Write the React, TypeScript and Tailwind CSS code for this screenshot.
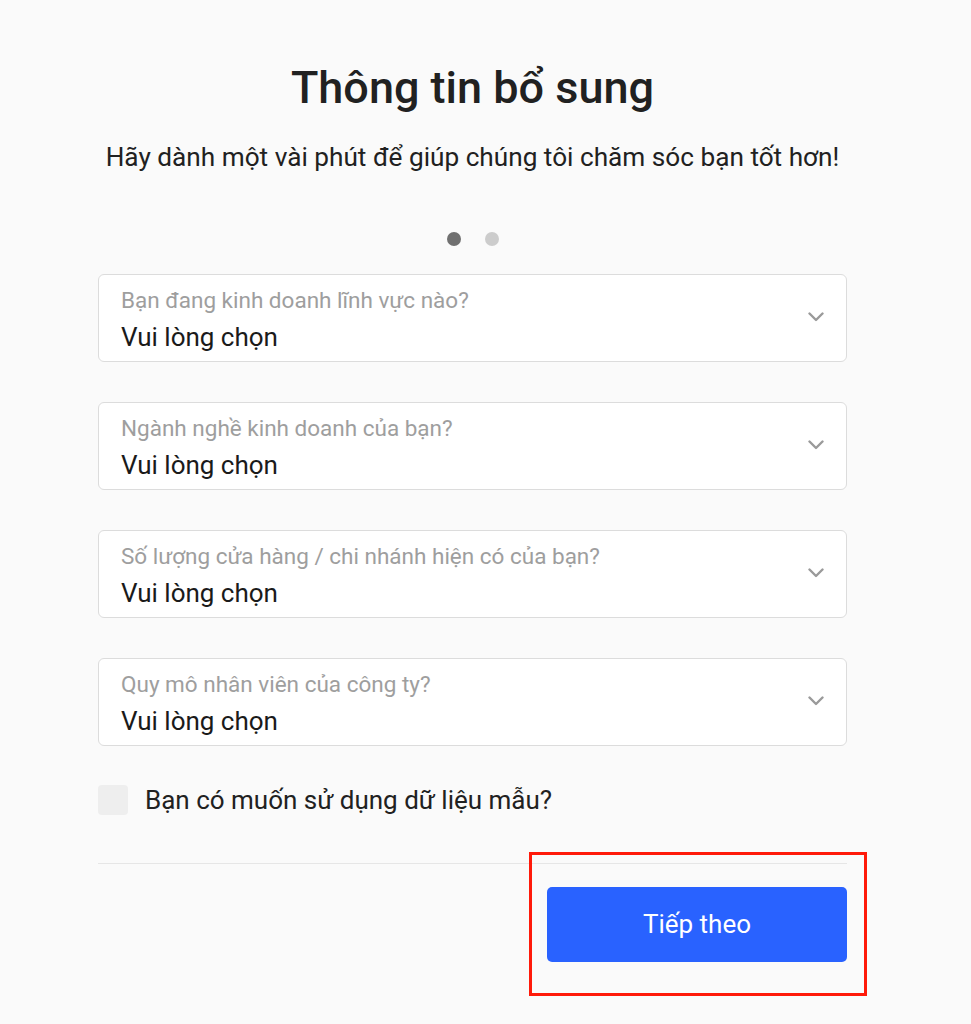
const fields = [
  "Bạn đang kinh doanh lĩnh vực nào?",
  "Ngành nghề kinh doanh của bạn?",
  "Số lượng cửa hàng / chi nhánh hiện có của bạn?",
  "Quy mô nhân viên của công ty?",
];

function Chevron() {
  return (
    <svg width="16" height="10" viewBox="0 0 16 10" fill="none" className="mr-[4px] mt-[-2px]">
      <path
        d="M1.5 1.5 L8 8 L14.5 1.5"
        stroke="#9a9a9a"
        strokeWidth="2.4"
        strokeLinecap="round"
        strokeLinejoin="round"
      />
    </svg>
  );
}

export default function App() {
  return (
    <div className="relative min-h-[1024px] w-full bg-[#fafafa] font-['Roboto',sans-serif]">
      <div className="ml-[98px] flex w-[749px] flex-col pt-[58px]">
        <h1 className="text-center text-[45px] font-medium leading-[60px] text-[#212121]">
          Thông tin bổ sung
        </h1>
        <p className="mt-[22px] text-center text-[26.2px] leading-[34px] text-[#212121]">
          Hãy dành một vài phút để giúp chúng tôi chăm sóc bạn tốt hơn!
        </p>

        {/* Step dots */}
        <div className="mt-[58px] flex justify-center gap-[24px]">
          <span className="h-[14px] w-[14px] rounded-full bg-[#707070]" />
          <span className="h-[14px] w-[14px] rounded-full bg-[#cccccc]" />
        </div>

        <div className="mt-[28px] flex flex-col gap-[40px]">
          {fields.map((label) => (
            <div
              key={label}
              className="flex h-[88px] items-center justify-between rounded-[6px] border border-[#dcdcdc] bg-white pl-[22px] pr-[18px]"
            >
              <div className="flex flex-col self-start pt-[12px]">
                <span className="text-[22.5px] leading-[26px] text-[#9e9e9e]">
                  {label}
                </span>
                <span className="mt-[9px] text-[26px] leading-[30px] text-[#1a1a1a]">
                  Vui lòng chọn
                </span>
              </div>
              <Chevron />
            </div>
          ))}
        </div>

        <label className="mt-[39px] flex items-center gap-[17px]">
          <span className="h-[30px] w-[30px] rounded-[4px] bg-[#eeeeee]" />
          <span className="text-[26px] leading-[30px] text-[#212121]">
            Bạn có muốn sử dụng dữ liệu mẫu?
          </span>
        </label>

        <div className="mt-[48px] h-px w-full bg-[#e6e6e6]" />

        <div className="mt-[23px] flex justify-end">
          <button className="h-[75px] w-[300px] rounded-[5px] bg-[#2962ff] text-[26px] text-white">
            Tiếp theo
          </button>
        </div>
      </div>

      {/* Highlight annotation */}
      <div className="pointer-events-none absolute left-[529px] top-[852px] h-[144px] w-[338px] border-[3px] border-[#ff1a0a]" />
    </div>
  );
}
